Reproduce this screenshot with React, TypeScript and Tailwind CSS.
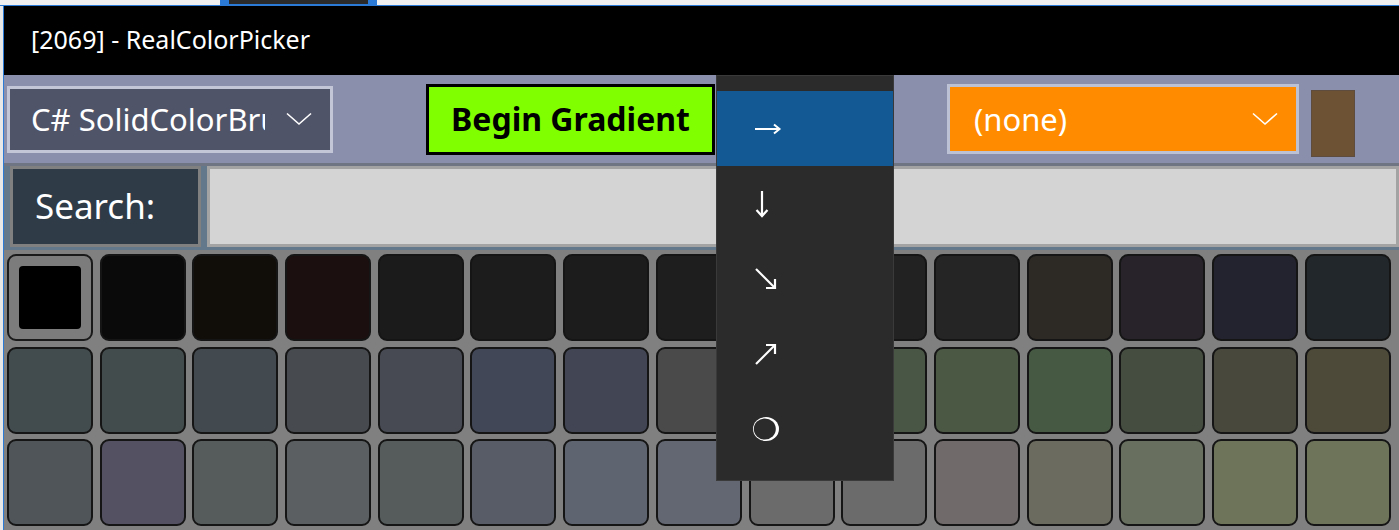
import React from "react";

const rows = [
  ["#000000", "#0a0a0a", "#110d09", "#1b0f0f", "#1b1b1b", "#1c1c1c", "#1c1c1c", "#1e1e1e", "#202020", "#222222", "#252525", "#2d2924", "#28232b", "#23222f", "#21272a"],
  ["#424b4d", "#434c4c", "#434a4f", "#474a4f", "#474a53", "#424757", "#424654", "#4a4a4a", "#4a5040", "#4a5645", "#4a5844", "#465a43", "#454d41", "#48483d", "#4d4a3a"],
  ["#4f5559", "#545262", "#565b5b", "#5b5f61", "#565c5c", "#585c66", "#5f6570", "#636772", "#6b6b6b", "#6b6b6b", "#706b6a", "#6c6b5f", "#686f5e", "#6d745a", "#6e745a"],
];

const font = { fontFamily: '"Segoe UI", "Noto Sans", "Open Sans", sans-serif' };

function Chevron() {
  return (
    <svg width="26" height="14" viewBox="0 0 26 14" fill="none">
      <polyline points="1,1.5 13,12 25,1.5" stroke="white" strokeWidth="1.6" />
    </svg>
  );
}

export default function App() {
  return (
    <div className="w-[1399px] h-[530px] overflow-hidden relative bg-[#f0f0f0]" style={font}>
      {/* top strip with taskbar thumb */}
      <div className="h-[5px] relative">
        <div className="absolute left-[220px] top-0 w-[157px] h-[5px] bg-[#2b7bd6]">
          <div className="mx-[9px] h-[4px] bg-[#2a2a2a]" />
        </div>
      </div>
      <div className="h-[1px] bg-[#2b7bd6]" />

      <div className="flex h-[524px]">
        <div className="w-[3px] bg-[#e8e8e8]" />
        <div className="w-[1px] bg-[#2b7bd6]" />

        <div className="flex-1 flex flex-col">
          {/* title bar */}
          <div className="h-[69px] bg-black flex items-center pl-[27px] pb-[2px]">
            <span className="text-white text-[25px]">[2069] - RealColorPicker</span>
          </div>

          {/* toolbar */}
          <div className="h-[88px] bg-[#8a90ab] flex items-center">
            <div className="ml-[3px] w-[326px] h-[67px] border-[3px] border-[#c2c6d6] bg-[#505468] flex items-center pl-[21px] pr-[18px]">
              <span className="text-white text-[31px] w-[234px] overflow-hidden whitespace-nowrap leading-none">C# SolidColorBrush</span>
              <span className="ml-auto"><Chevron /></span>
            </div>

            <div className="ml-[93px] w-[289px] h-[71px] border-[3px] border-black bg-[#80ff00] flex items-center justify-center">
              <span className="text-black text-[32px] font-bold">Begin Gradient</span>
            </div>

            <div className="ml-[232px] w-[352px] h-[70px] border-[3px] border-[#bcc1d4] bg-[#ff8c00] flex items-center pl-[24px] pr-[18px]">
              <span className="text-white text-[31px]">(none)</span>
              <span className="ml-auto"><Chevron /></span>
            </div>

            <div className="ml-[12px] mt-[9px] w-[44px] h-[67px] bg-[#6e5234] border border-[#5e4c3e]" />
          </div>

          {/* search row */}
          <div className="h-[87px] bg-[#63788a] border-t-[3px] border-[#6f7582] flex items-stretch pb-[3px]">
            <div className="ml-[6px] w-[191px] border-[3px] border-[#808080] bg-[#2f3c48] flex items-center pl-[22px]">
              <span className="text-white text-[35px]">Search:</span>
            </div>
            <div className="ml-[6px] flex-1 border-[3px] border-[#a3a3a3] bg-[#d4d4d4]" />
          </div>

          {/* color tiles */}
          <div className="flex-1 bg-[#808080] pt-[4px] pl-[3px]">
            <div className="grid grid-cols-[repeat(15,86px)] auto-rows-[87px] gap-x-[6.7px] gap-y-[5.5px]">
              {rows.flatMap((row, r) =>
                row.map((c, i) =>
                  r === 0 && i === 0 ? (
                    <div key={`${r}-${i}`} className="rounded-[9px] border-2 border-[#1a1a1a] bg-[#7c7c7c] p-[10px]">
                      <div className="w-full h-full rounded-[4px] bg-black" />
                    </div>
                  ) : (
                    <div
                      key={`${r}-${i}`}
                      className="rounded-[9px] border-2 border-[#151515]"
                      style={{ backgroundColor: c }}
                    />
                  )
                )
              )}
            </div>
          </div>
        </div>
      </div>

      {/* gradient direction dropdown */}
      <div className="absolute left-[716px] top-[75px] w-[178px] h-[406px] bg-[#2b2b2b] border border-[#3a3a3a] pt-[15px]">
        <div className="h-[75px] bg-[#135a94] flex items-center pl-[37px]">
          <svg width="28" height="12" viewBox="0 0 28 12">
            <line x1="1" y1="6" x2="25" y2="6" stroke="white" strokeWidth="2" />
            <polyline points="20,1.5 25.5,6 20,10.5" fill="none" stroke="white" strokeWidth="2" />
          </svg>
        </div>
        <div className="h-[75px] flex items-center pl-[38px]">
          <svg width="14" height="28" viewBox="0 0 14 28">
            <line x1="7" y1="1" x2="7" y2="25" stroke="white" strokeWidth="2.2" />
            <polyline points="1.5,20 7,26 12.5,20" fill="none" stroke="white" strokeWidth="2.2" />
          </svg>
        </div>
        <div className="h-[75px] flex items-center pl-[37px]">
          <svg width="24" height="24" viewBox="0 0 24 24">
            <line x1="2" y1="2" x2="20" y2="20" stroke="white" strokeWidth="2.2" />
            <polyline points="21,12 21,21 12,21" fill="none" stroke="white" strokeWidth="2.2" />
          </svg>
        </div>
        <div className="h-[75px] flex items-center pl-[37px]">
          <svg width="24" height="24" viewBox="0 0 24 24">
            <line x1="2" y1="22" x2="20" y2="4" stroke="white" strokeWidth="2.2" />
            <polyline points="12,3 21,3 21,12" fill="none" stroke="white" strokeWidth="2.2" />
          </svg>
        </div>
        <div className="h-[75px] flex items-center pl-[35px]">
          <svg width="28" height="26" viewBox="0 0 28 26">
            <ellipse cx="14" cy="13" rx="13" ry="12" fill="white" />
            <ellipse cx="12.8" cy="13" rx="11" ry="10.5" fill="#2b2b2b" />
          </svg>
        </div>
      </div>
    </div>
  );
}
